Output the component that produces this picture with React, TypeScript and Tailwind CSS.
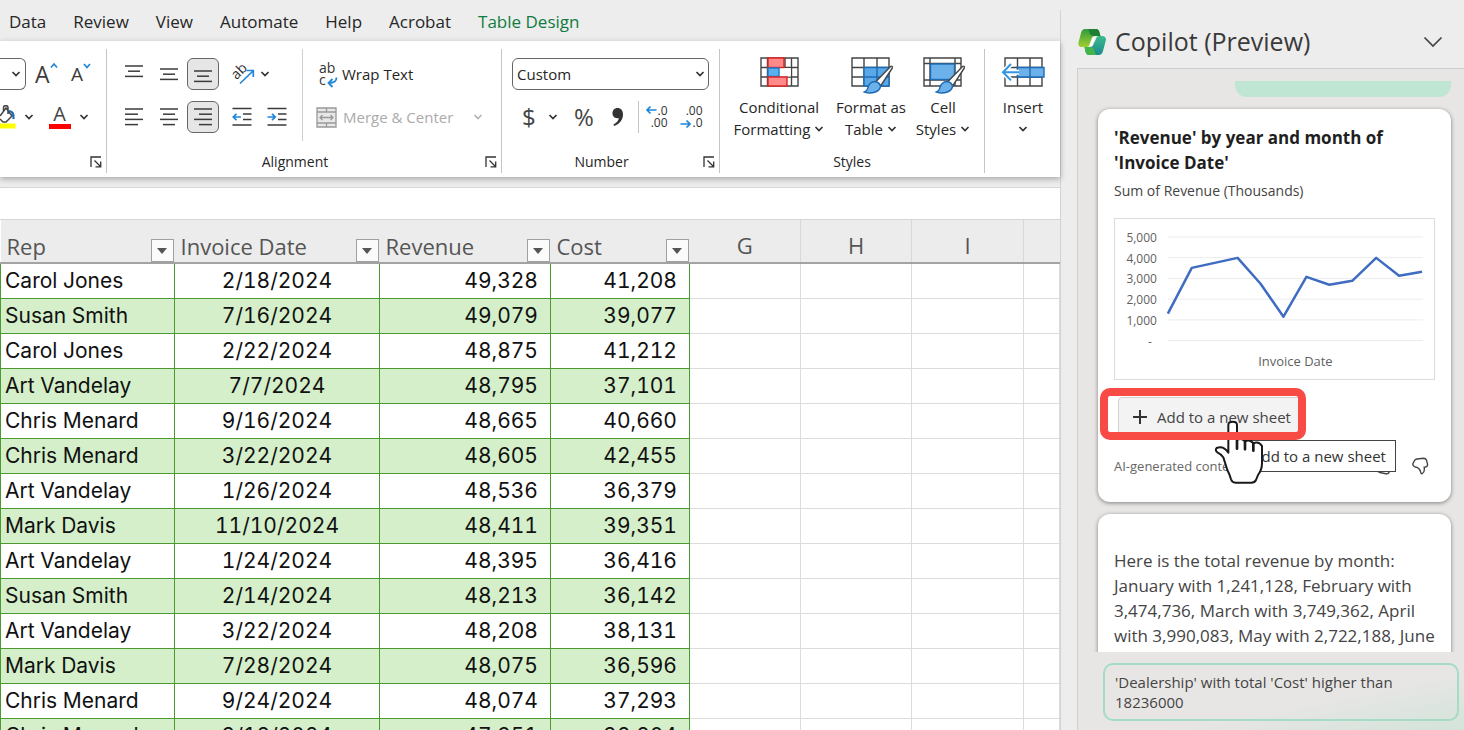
import React from 'react';

type Row = [rep: string, date: string, revenue: string, cost: string];

const tabs = ['Data', 'Review', 'View', 'Automate', 'Help', 'Acrobat', 'Table Design'];

const rows: Row[] = [
  ['Carol Jones', '2/18/2024', '49,328', '41,208'],
  ['Susan Smith', '7/16/2024', '49,079', '39,077'],
  ['Carol Jones', '2/22/2024', '48,875', '41,212'],
  ['Art Vandelay', '7/7/2024', '48,795', '37,101'],
  ['Chris Menard', '9/16/2024', '48,665', '40,660'],
  ['Chris Menard', '3/22/2024', '48,605', '42,455'],
  ['Art Vandelay', '1/26/2024', '48,536', '36,379'],
  ['Mark Davis', '11/10/2024', '48,411', '39,351'],
  ['Art Vandelay', '1/24/2024', '48,395', '36,416'],
  ['Susan Smith', '2/14/2024', '48,213', '36,142'],
  ['Art Vandelay', '3/22/2024', '48,208', '38,131'],
  ['Mark Davis', '7/28/2024', '48,075', '36,596'],
  ['Chris Menard', '9/24/2024', '48,074', '37,293'],
  ['Chris Menard', '3/18/2024', '47,951', '38,804'],
];

function Chevron({ className = 'text-[#333]' }: { className?: string }) {
  return (
    <svg width="10" height="8" viewBox="0 0 10 8" fill="none" stroke="currentColor" strokeWidth="1.7" className={`shrink-0 ${className}`}>
      <path d="M1.5 2l3.5 3.5L8.500 2" />
    </svg>
  );
}

// Text lines of an alignment icon, given as [x1, x2] pairs
function Lines({ lines, top = 1 }: { lines: [number, number][]; top?: number }) {
  return (
    <svg width="20" height="20" viewBox="0 0 20 20" stroke="#3b3b3b" strokeWidth="1.5">
      {lines.map(([a, b], i) => (
        <line key={i} x1={a} x2={b} y1={top + i * 5.2} y2={top + i * 5.2} />
      ))}
    </svg>
  );
}

function Indent({ right = false }: { right?: boolean }) {
  return (
    <svg width="20" height="20" viewBox="0 0 20 20" fill="none" stroke="#3b3b3b" strokeWidth="1.5">
      <path d="M.5 1.500h19M11 7h8.500M11 12.500h8.500M.5 18h19" />
      <path d={right ? 'M.5 10h7.500M5 6.800l3.200 3.200L5 13.200' : 'M9 10H1.200M4.500 6.800L1.300 10l3.200 3.200'} stroke="#1f86d9" strokeWidth="1.7" />
    </svg>
  );
}

function Launcher() {
  return (
    <button aria-label="More options" className="flex h-4 w-4 items-center justify-center">
      <svg width="12" height="12" viewBox="0 0 12 12" fill="none" stroke="#333" strokeWidth="1.3">
        <path d="M1 11V1h10M4.500 4.500l6 6M10.700 5.500v5.300H5.500" />
      </svg>
    </button>
  );
}

function IconButton({ label, active = false, children }: { label: string; active?: boolean; children: React.ReactNode }) {
  return (
    <button
      aria-label={label}
      className={
        active
          ? 'mx-px flex h-8 w-8 items-center justify-center rounded-md border border-[#666] bg-[#e6e6e6]'
          : 'flex h-8 w-[35px] items-center justify-center'
      }
    >
      {children}
    </button>
  );
}

function GroupLabel({ children }: { children: React.ReactNode }) {
  return (
    <div className="mt-auto flex h-[22px] items-center pr-[2px]">
      <span className="flex-1 text-center text-sm">{children}</span>
      <Launcher />
    </div>
  );
}

function Brush() {
  return (
    <>
      <path d="M39.500 9.500c1.500-1 2.500.5 1.500 2L30 28.500l-5-4z" fill="#fff" stroke="#444" strokeWidth="1.400" />
      <path d="M24 24.500c3 .5 5 2 5.500 5-1 5.500-9 8-16 5.500 4-1.500 2.500-4 4.500-7 1.300-2 3.500-3.500 6-3.500z" fill="#6db1ea" stroke="#1b6cb5" strokeWidth="1.400" />
    </>
  );
}

function ConditionalIcon() {
  return (
    <svg width="40" height="38" viewBox="-1 0 40 38" fill="none" strokeWidth="1.400">
      <path d="M1 1h37v28H1zM1 10.500h37M1 20h37M7.500 1v28M31.500 1v28M25 1v28" stroke="#444" />
      <path d="M19.500 11h11.300v8.500H19.500z" fill="#fff" />
      <rect x="8" y="1" width="16" height="9.500" fill="#ff8a8a" stroke="#e02020" />
      <rect x="8" y="11" width="11" height="8.500" fill="#5cb0f0" stroke="#1b78c8" />
      <rect x="8" y="20" width="19" height="9" fill="#ff8a8a" stroke="#e02020" />
    </svg>
  );
}

function TableIcon() {
  return (
    <svg width="44" height="38" viewBox="-2 0 44 38" fill="none" strokeWidth="1.400">
      <path d="M1 1h37v28H1zM1 10.500h37M1 20h37M13 1v28M26 1v28" stroke="#444" />
      <path d="M13 10.500h25v18.500H13z" fill="#5ba8e8" stroke="#1b6cb5" />
      <path d="M13 20h25M26 10.500v18.500" stroke="#1b6cb5" />
      <Brush />
    </svg>
  );
}

function CellStylesIcon() {
  return (
    <svg width="44" height="38" viewBox="-2 0 44 38" fill="none" strokeWidth="1.400">
      <path d="M1 1h37v28H1zM1 6.500h37M1 23h37M7 1v28M32 1v28" stroke="#444" />
      <rect x="7.500" y="7" width="24" height="15.500" fill="#6db1ea" stroke="#1b6cb5" />
      <Brush />
    </svg>
  );
}

function InsertIcon() {
  return (
    <svg width="44" height="38" viewBox="0 0 44 38" fill="none" strokeWidth="1.400">
      <path d="M4 1h37v28H4zM4 10.500h37M4 20h37M16.500 1v28M29 1v28" stroke="#444" />
      <path d="M16.500 10.500H43V20H16.500zM29 10.500V20" fill="#6db1ea" stroke="#1b6cb5" />
      <path d="M18 15.200H2M10 7l-8 8.200 8 8.200" stroke="#fff" strokeWidth="5" />
      <path d="M18 15.200H2M10 7l-8 8.200 8 8.200" stroke="#2f95e6" strokeWidth="2" />
    </svg>
  );
}

function Decimals({ increase = false }: { increase?: boolean }) {
  return (
    <span className="relative flex w-[22px] flex-col items-end text-xs leading-3 text-[#333]">
      <span>{increase ? '.0' : '.00'}</span>
      <span>{increase ? '.00' : '.0'}</span>
      <svg width="12" height="10" viewBox="0 0 12 10" fill="none" stroke="#1f86d9" strokeWidth="1.700" className={increase ? 'absolute top-0 -left-px' : 'absolute bottom-0 -left-px'}>
        <path d={increase ? 'M11.500 5H2M5.500 1.500L2 5l3.500 3.500' : 'M.5 5H10M6.500 1.500L10 5 6.500 8.500'} />
      </svg>
    </span>
  );
}

function StyleButton({ icon, top, bottom, className }: { icon: React.ReactNode; top: string; bottom?: string; className: string }) {
  return (
    <button className={`flex flex-col items-center text-[15px] leading-[22px] ${className}`}>
      {icon}
      <span className="mt-px whitespace-nowrap">{top}</span>
      <span className="flex h-[22px] items-center gap-1 whitespace-nowrap">
        {bottom}
        <Chevron />
      </span>
    </button>
  );
}

function Ribbon() {
  return (
    <div className="relative z-10 flex h-[136px] shrink-0 overflow-hidden bg-white pt-2 pb-1 shadow-[0_2px_6px_rgba(0,0,0,0.3)]">
      {/* Font */}
      <div className="flex w-[107px] shrink-0 flex-col border-r border-[#c4c4c4]">
        <div className="flex h-[50px] items-center">
          <button aria-label="Font size" className="flex h-8 w-[26px] items-center justify-end rounded-r-md border border-l-0 border-[#666] pr-1">
            <Chevron />
          </button>
          <button aria-label="Increase font size" className="ml-[9px] flex w-9 text-[23px] leading-8 text-[#3b3b3b]">
            A
            <svg width="8" height="8" viewBox="0 0 8 8" className="mt-1" fill="none" stroke="#1f86d9" strokeWidth="1.700">
              <path d="M1 5.500L4 2l3 3.500" />
            </svg>
          </button>
          <button aria-label="Decrease font size" className="flex text-[19px] leading-8 text-[#3b3b3b]">
            A
            <svg width="8" height="8" viewBox="0 0 8 8" className="mt-1" fill="none" stroke="#1f86d9" strokeWidth="1.700">
              <path d="M1 2l3 3.500L7 2" />
            </svg>
          </button>
        </div>
        <div className="flex h-9 items-center">
          <button aria-label="Fill color" className="w-4">
            <svg width="16" height="24" viewBox="0 0 16 24" fill="none" strokeWidth="1.500">
              <path d="M0 11L6 3l6 8-6 6H3L0 14M3.500 7V2.500C3.500 0 8 0 8 2.500V9" stroke="#444" />
              <path d="M9 6c3.500 0 5 3 4.500 8" stroke="#1b6cb5" strokeWidth="2.200" />
              <path d="M0 18.500h15.500v5H0z" fill="#ffff00" />
            </svg>
          </button>
          <span className="w-7 pl-2"><Chevron /></span>
          <button aria-label="Font color" className="flex w-[31px] flex-col items-center text-xl leading-[18px] text-[#444]">
            A
            <span className="mt-px h-[5px] w-[22px] bg-[#f00]" />
          </button>
          <span className="pl-1"><Chevron /></span>
        </div>
        <div className="mt-auto flex h-[22px] items-center justify-end pr-[2px]"><Launcher /></div>
      </div>

      {/* Alignment */}
      <div className="flex w-[395px] shrink-0 flex-col border-r border-[#c4c4c4]">
        <div className="flex h-[92px]">
          <div className="flex w-[196px] flex-col border-r border-[#d0d0d0] pl-[9px]">
            <div className="flex h-[50px] items-center">
              <IconButton label="Top align"><Lines top={2} lines={[[1, 19], [4, 16], [1, 19]]} /></IconButton>
              <IconButton label="Middle align"><Lines top={5} lines={[[1, 19], [4, 16], [1, 19]]} /></IconButton>
              <IconButton label="Bottom align" active><Lines top={7} lines={[[1, 19], [4, 16], [1, 19]]} /></IconButton>
              <button aria-label="Orientation" className="ml-3 flex items-center gap-1">
                <svg width="24" height="24" viewBox="0 0 24 24" fill="none" className="overflow-visible">
                  <text x="2" y="16" transform="rotate(-45 6 14)" fontFamily="Open Sans, sans-serif" fontSize="14" fill="#333">ab</text>
                  <path d="M8 21.500L21 9M14.500 8.500H21.300V15" stroke="#1f86d9" strokeWidth="1.700" />
                </svg>
                <Chevron />
              </button>
            </div>
            <div className="flex h-9 items-center">
              <IconButton label="Align left"><Lines top={2} lines={[[1, 19], [1, 14], [1, 19], [1, 14]]} /></IconButton>
              <IconButton label="Center"><Lines top={2} lines={[[1, 19], [4, 16], [1, 19], [4, 16]]} /></IconButton>
              <IconButton label="Align right" active><Lines top={2} lines={[[1, 19], [6, 19], [1, 19], [6, 19]]} /></IconButton>
              <span className="ml-1 flex">
                <IconButton label="Decrease indent"><Indent /></IconButton>
                <IconButton label="Increase indent"><Indent right /></IconButton>
              </span>
            </div>
          </div>
          <div className="flex flex-col pl-[13px] text-[15px]">
            <button className="flex h-[50px] items-center gap-1">
              <span className="relative flex w-[22px] flex-col pl-[3px] text-left text-sm leading-3 text-[#333]">
                <span>ab</span>
                <span>c</span>
                <svg width="11" height="11" viewBox="0 0 11 11" fill="none" stroke="#1f86d9" strokeWidth="1.800" className="absolute right-0 bottom-[-2px]">
                  <path d="M9.500.5c0 4-3 5.500-7.500 5.500M5.500 2l-4 4 4 4" />
                </svg>
              </span>
              Wrap Text
            </button>
            <button className="flex h-9 items-center text-[#ababab]">
              <svg width="21" height="21" viewBox="0 0 21 21" fill="#e8e8e8" stroke="#999" strokeWidth="1.300" className="mr-[6px]">
                <path d="M1 1h19v19H1zM1 5h19M1 16h19M10.500 1v4M10.500 16v4" />
                <path d="M4 10.500h13M6.500 8L4 10.500 6.500 13M14.500 8l2.500 2.500-2.500 2.500" fill="none" />
              </svg>
              Merge &amp; Center
              <Chevron className="ml-5 text-[#b5b5b5]" />
            </button>
          </div>
        </div>
        <GroupLabel>Alignment</GroupLabel>
      </div>

      {/* Number */}
      <div className="flex w-[218px] shrink-0 flex-col border-r border-[#c4c4c4]">
        <div className="flex h-[50px] items-center px-[10px]">
          <label className="relative flex w-full items-center">
            <span className="sr-only">Number format</span>
            <select className="h-8 w-full appearance-none rounded-md border border-[#666] bg-white pl-1 text-[15px] leading-5">
              <option>Custom</option>
            </select>
            <span className="pointer-events-none absolute right-1"><Chevron /></span>
          </label>
        </div>
        <div className="flex h-9 items-center text-2xl text-[#444]">
          <button aria-label="Accounting format" className="ml-5 flex w-[38px] items-center gap-3">
            $<Chevron />
          </button>
          <button className="ml-3 w-6 text-2xl">%</button>
          <button aria-label="Comma style" className="ml-4 flex w-3 justify-center">
            <svg width="12" height="18" viewBox="0 0 12 18" fill="#333">
              <path d="M5.500 0C9 0 11 2.500 11 6.500 11 12 7.500 16 2 18l-.5-1.500C5 14.500 6.500 12.500 6.800 10 3 11 .5 8.500.5 5.500.5 2.200 2.500 0 5.500 0z" />
            </svg>
          </button>
          <span className="ml-[14px] h-8 border-l border-[#c4c4c4]" />
          <button aria-label="Increase decimal" className="flex w-[35px] justify-center"><Decimals increase /></button>
          <button aria-label="Decrease decimal" className="flex w-[35px] justify-center"><Decimals /></button>
        </div>
        <GroupLabel>Number</GroupLabel>
      </div>

      {/* Styles */}
      <div className="flex w-[265px] shrink-0 flex-col border-r border-[#c4c4c4]">
        <div className="flex pt-2 pl-2">
          <StyleButton className="w-[102px]" icon={<ConditionalIcon />} top="Conditional" bottom="Formatting" />
          <StyleButton className="w-[82px]" icon={<TableIcon />} top="Format as" bottom="Table" />
          <StyleButton className="w-[62px]" icon={<CellStylesIcon />} top="Cell" bottom="Styles" />
        </div>
        <div className="mt-auto h-[22px] text-center text-sm leading-[22px]">Styles</div>
      </div>

      <div className="shrink-0 pt-2">
        <StyleButton className="w-[76px]" icon={<InsertIcon />} top="Insert" />
      </div>
    </div>
  );
}

function FilterHeader({ children }: { children: string }) {
  return (
    <th scope="col" className="h-[43px] p-0 text-left font-normal">
      <div className="flex h-[42px] items-end justify-between pr-px pl-[6px]">
        <span className="leading-8">{children}</span>
        <button aria-label={`Filter ${children}`} className="flex h-[23px] w-[23px] items-center justify-center border border-[#a0a0a0] bg-[#fbfbfb]">
          <span className="border-x-[5px] border-t-[6px] border-x-transparent border-t-[#555]" />
        </button>
      </div>
    </th>
  );
}

function Sheet() {
  return (
    <div className="min-h-0 flex-1 overflow-hidden bg-white">
      <table className="w-full table-fixed border-collapse text-[22px]">
        <colgroup>
          <col className="w-[174px]" />
          <col className="w-[205px]" />
          <col className="w-[171px]" />
          <col className="w-[139px]" />
          <col className="w-[111px]" />
          <col className="w-[111px]" />
          <col className="w-[112px]" />
          <col />
        </colgroup>
        <thead className="border-b-2 border-[#a3a3a3] bg-[#ececec] text-[#555]">
          <tr>
            <FilterHeader>Rep</FilterHeader>
            <FilterHeader>Invoice Date</FilterHeader>
            <FilterHeader>Revenue</FilterHeader>
            <FilterHeader>Cost</FilterHeader>
            {['G', 'H', 'I'].map((c) => (
              <th key={c} scope="col" className="border-r border-[#d8d8d8] p-0 pt-2 font-normal">{c}</th>
            ))}
            <td />
          </tr>
        </thead>
        <tbody className="font-['Inter',sans-serif] text-[21px] text-[#111] tabular-nums">
          {rows.map(([rep, date, revenue, cost], i) => (
            <tr key={i} className="h-[35px] leading-[34px] [&>td]:border [&>td]:p-0">
              {[rep, date, revenue, cost].map((value, col) => (
                <td
                  key={col}
                  className={[
                    'border-[#4a9a30] whitespace-nowrap',
                    i % 2 ? 'bg-[#d4efc9]' : 'bg-white',
                    col === 0 ? 'text-left' : col === 1 ? 'text-center' : 'text-right',
                  ].join(' ')}
                >
                  <span className={col === 0 ? 'pl-1' : col > 1 ? 'pr-3' : ''}>{value}</span>
                </td>
              ))}
              <td className="border-[#dcdcdc]" />
              <td className="border-[#dcdcdc]" />
              <td className="border-[#dcdcdc]" />
              <td className="border-[#dcdcdc]" />
            </tr>
          ))}
        </tbody>
      </table>
    </div>
  );
}

const chartPoints = '53,95 77,49 100,44 123,39 146,65 169,98 192,58 215,66 238,62 262,39 285,57 308,53';

function RevenueChart() {
  return (
    <svg viewBox="0 0 320 161" className="block w-full" fontFamily="Open Sans, sans-serif" fontSize="12" fill="#5f5f5f">
      {['5,000', '4,000', '3,000', '2,000', '1,000', '-'].map((label, i) => (
        <g key={label}>
          <text x={i === 5 ? 37 : 42} y={23 + i * 20.8} textAnchor="end">{label}</text>
          <line x1="53" x2="309" y1={18 + i * 20.8} y2={18 + i * 20.8} stroke="#ececec" />
        </g>
      ))}
      <polyline points={chartPoints} fill="none" stroke="#3f6cc0" strokeWidth="2.500" strokeLinejoin="round" />
      <text x="181" y="147" textAnchor="middle" fontSize="13">Invoice Date</text>
    </svg>
  );
}

function CopilotLogo() {
  return (
    <svg width="28" height="28" viewBox="0 0 28 28">
      <defs>
        <linearGradient id="leaf" x1="0" y1="0" x2="0" y2="1">
          <stop offset="0" stopColor="#2f9a3c" />
          <stop offset="1" stopColor="#a2cf2f" />
        </linearGradient>
        <linearGradient id="teal" x1="0" y1="0" x2="0" y2="1">
          <stop offset="0" stopColor="#3dbb8c" />
          <stop offset="1" stopColor="#1c8a8f" />
        </linearGradient>
      </defs>
      <path d="M7 1h11c2 0 3 1.500 3.500 3.500L22.500 8H17c-2 0-3 1-3.500 3L11.500 16.500C11 18.500 10 19 8 19H4C1 19 0 17 .5 14.500L3 5c.7-2.500 2-4 4-4z" fill="url(#leaf)" />
      <path d="M10 1h8c2 0 3 1.500 3.500 3.500L22.500 8H16c-3 0-4-1.500-4.500-3.500C11 2.500 11 1.500 10 1z" fill="#1f7f35" />
      <path d="M21 8h3c3 0 4.500 2 3.800 4.500L25 23c-.7 2.500-2 4-4.500 4H11c-2 0-3-1.500-3.500-3.500L6.500 19H12c2 0 3-1 3.500-3L18 11c.5-2 1-3 3-3z" fill="url(#teal)" />
      <path d="M6.500 19H12c3 0 4 2 4.500 4 .5 2 1 3 2 4H11c-2 0-3-1.500-3.500-3.500z" fill="#43b649" />
      <path d="M16.800 9.500l-2.700 8.500h-2.600l2.700-7.500c.3-.7 1.500-1 2.600-1z" fill="#fff" />
    </svg>
  );
}

function HandCursor() {
  return (
    <svg width="50" height="65" viewBox="0 0 150 195" fill="#fff" stroke="#1a1a1a" strokeWidth="6" strokeLinejoin="round" strokeLinecap="round">
      <path d="M43 98V15Q43 5 56 5 69 5 69 15V60Q82 52 93 64 108 56 118 70 134 62 144 78V130Q144 150 132 165L126 180Q122 188 112 188H64Q54 188 51 178 48 165 40 150L28 112Q24 104 10 97 2 90 8 84 28 76 43 98Z" />
      <path d="M69 58V86M93 64V88M118 70V92" fill="none" strokeWidth="8" />
    </svg>
  );
}

function RevenueCard() {
  return (
    <section className="rounded-xl bg-white px-4 pt-4 pb-[27px] shadow-[0_1px_4px_rgba(0,0,0,0.45)]">
      <h2 className="pr-8 text-[17px] leading-[25px] font-bold text-[#1f1f1f]">&#39;Revenue&#39; by year and month of &#39;Invoice Date&#39;</h2>
      <p className="mt-1 text-sm leading-6 text-[#444]">Sum of Revenue (Thousands)</p>
      <div className="mt-[15px] border border-[#dcdcdc]">
        <RevenueChart />
      </div>
      <div className="relative mt-[17px] ml-1">
        <button className="flex h-10 w-[184px] items-center gap-2 rounded-t border border-[#d0d0d0] bg-[#f3f3f3] pl-3 text-[15px] whitespace-nowrap text-[#444]">
          <svg width="18" height="18" viewBox="0 0 18 18" stroke="#333" strokeWidth="2"><path d="M9 2v14M2 9h14" /></svg>
          Add to a new sheet
        </button>
        <div role="tooltip" className="absolute top-[43px] left-[119px] z-10 flex h-8 items-center border border-[#444] bg-white pr-[9px] pl-[14px] text-[15px] whitespace-nowrap text-[#333]">
          Add to a new sheet
        </div>
        <div className="absolute top-[23px] left-[96px] z-20"><HandCursor /></div>
        <div className="absolute -top-[9px] -left-[18px] z-30 h-[52px] w-[206px] rounded-[10px] border-8 border-[#f84b46]" />
      </div>
      <div className="mt-5 flex items-center text-[13px] leading-[18px] text-[#666]">
        <span className="flex-1">AI-generated content</span>
        <button aria-label="Like" className="mr-5">
          <svg width="16" height="18" viewBox="0 0 16 18" fill="none" stroke="#444" strokeWidth="1.400"><path d="M1 12c0-3 3-4 4-6l1.500-4.500c2 0 3 2 2 5H13c1.500 0 2 1 1.700 2.500l-1.500 6c-.4 1.500-2 2-3.500 1.700L4 15.500C2 15 1 14 1 12z" /></svg>
        </button>
        <button aria-label="Dislike" className="mr-[6px]">
          <svg width="17" height="18" viewBox="0 0 17 18" fill="none" stroke="#444" strokeWidth="1.400"><path d="M5 2l6.500-.8c1.500 0 2.500.6 3 2l1 4c.3 1.600-.5 2.500-2 2.800l-1.300.2c.5 3-.3 5.500-2 6.500-1 .3-1.300-.5-1.500-1.500C8 12 6 10.500 3.500 10 1.500 9.500.5 8 1 6.500L2.500 3.500C3 2.500 4 2.200 5 2z" /></svg>
        </button>
      </div>
    </section>
  );
}

function CopilotPane() {
  return (
    <aside className="flex w-[404px] shrink-0 flex-col pt-[10px]">
      <div className="flex min-h-0 flex-1 flex-col border-l border-[#d2d2d2] pl-4">
        <header className="flex h-[58px] items-center pt-[6px] pr-5 pl-px">
          <CopilotLogo />
          <h1 className="ml-[9px] flex-1 text-[25px] text-[#3a3a3a]">Copilot (Preview)</h1>
          <button aria-label="Collapse pane">
            <svg width="22" height="14" viewBox="0 0 22 14" fill="none" stroke="#444" strokeWidth="1.700"><path d="M2.500 2.500L11 11l8.500-8.500" /></svg>
          </button>
        </header>
        <div className="flex min-h-0 flex-1 flex-col border-t border-l border-[#cfcfcf] bg-[#e8e6e5]">
          <div className="mt-3 min-h-0 flex-1 overflow-hidden pr-[13px] pl-5">
            <div className="ml-auto h-4 w-[216px] rounded-b-xl bg-[#bfe6d2]" />
            <div className="mt-3 flex flex-col gap-3">
              <RevenueCard />
              <section className="rounded-t-xl bg-white pt-[34px] pr-2 pb-8 pl-4 text-[17px] leading-[25px] text-[#444] shadow-[0_1px_4px_rgba(0,0,0,0.45)]">
                Here is the total revenue by month: January with 1,241,128, February with 3,474,736, March with 3,749,362, April with 3,990,083, May with 2,722,188, June
              </section>
            </div>
          </div>
          <div className="bg-gradient-to-br from-[#e8e6e5] from-60% to-[#d3e3da] pt-[11px] pr-[5px] pb-[9px] pl-[25px]">
            <button className="w-full rounded-[10px] border-2 border-[#a5dcc3] py-[7px] pr-12 pl-[10px] text-left text-[15px] leading-5 text-[#444]">
              &#39;Dealership&#39; with total &#39;Cost&#39; higher than 18236000
            </button>
          </div>
        </div>
      </div>
    </aside>
  );
}

export default function App() {
  return (
    <div className="flex h-screen overflow-hidden bg-[#ededed] font-['Open_Sans',sans-serif] text-[#262626]">
      <main className="flex min-w-0 flex-1 flex-col">
        <nav className="flex h-[41px] shrink-0 items-center gap-[27px] pt-[2px] pl-[9px] text-[17px] whitespace-nowrap">
          {tabs.map((tab) => (
            <a key={tab} href="#" className={tab === 'Table Design' ? 'text-[#107c41]' : ''}>{tab}</a>
          ))}
        </nav>
        <Ribbon />
        <div className="mt-[10px] h-[33px] shrink-0 border-y border-[#d5d5d5] bg-white" />
        <Sheet />
      </main>
      <CopilotPane />
    </div>
  );
}
